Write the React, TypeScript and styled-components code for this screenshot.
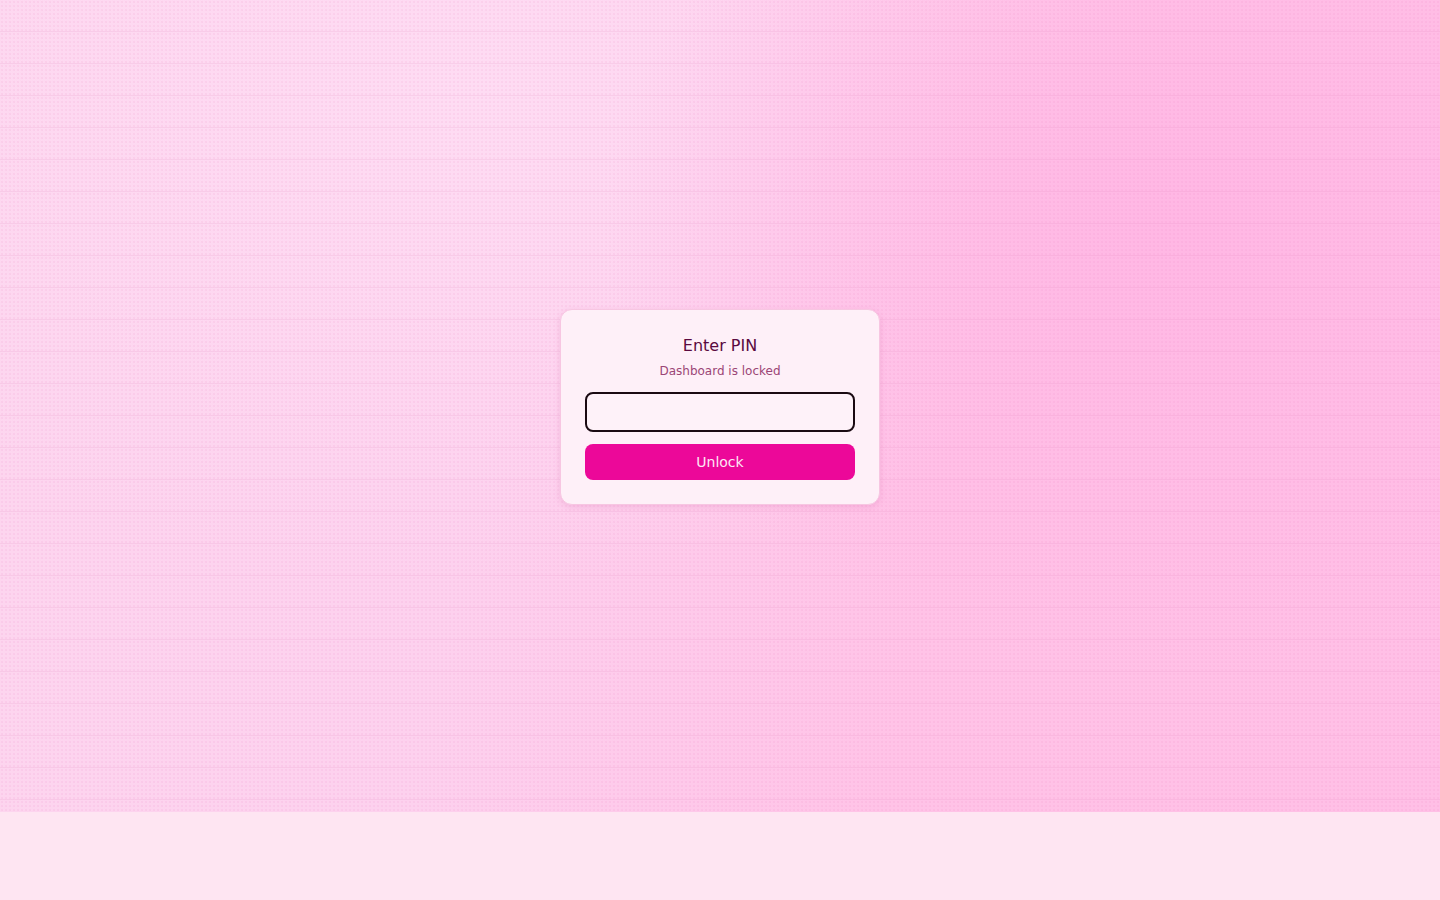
import React from "react";
import styled, { createGlobalStyle } from "styled-components";

const Global = createGlobalStyle`
  html, body { margin: 0; padding: 0; background: #fee5f2; }
  body { font-family: "DejaVu Sans", "Noto Sans", sans-serif; }
  * { box-sizing: border-box; }
`;

const Screen = styled.main`
  height: 812px;
  padding-top: 1px;
  display: flex;
  align-items: center;
  justify-content: center;
  background:
    repeating-linear-gradient(to bottom, transparent 0 31px, rgba(215, 110, 170, 0.12) 31px 32px),
    radial-gradient(circle, rgba(230, 110, 180, 0.1) 0.7px, transparent 1px) 0 0 / 4px 4px,
    radial-gradient(ellipse 40% 55% at 82% 28%, #ffb7e4 0%, rgba(255, 183, 228, 0) 100%),
    radial-gradient(ellipse 50% 60% at 32% 12%, #fedcf3 0%, rgba(254, 220, 243, 0) 100%),
    linear-gradient(100deg, #fdd6ef 0%, #fdd1ee 35%, #ffc3e7 65%, #ffbfe6 100%);
`;

const Card = styled.section`
  width: 320px;
  padding: 24px;
  display: flex;
  flex-direction: column;
  align-items: stretch;
  background: #fef0f8;
  border: 1px solid #f7c6e2;
  border-radius: 12px;
  box-shadow: 0 2px 6px rgba(200, 80, 150, 0.18);
`;

const Title = styled.h1`
  margin: 1px 0 0;
  font-size: 16px;
  font-weight: 400;
  line-height: 22px;
  text-align: center;
  color: #5a0a40;
`;

const Subtitle = styled.p`
  margin: 6px 0 13px;
  font-size: 12px;
  line-height: 16px;
  text-align: center;
  color: #9b4676;
`;

const PinInput = styled.input`
  height: 40px;
  width: 100%;
  border: 2px solid #1a0a12;
  border-radius: 8px;
  background: #fef2f9;
  text-align: center;
  font-family: inherit;
  font-size: 16px;
  color: #5a0a40;
  caret-color: #5a0a40;
  outline: none;
`;

const UnlockButton = styled.button`
  margin-top: 12px;
  height: 36px;
  width: 100%;
  border: none;
  border-radius: 8px;
  background: #ec0899;
  color: #fde7f4;
  font-family: inherit;
  font-size: 14px;
  cursor: pointer;
`;

export default function App() {
  return (
    <>
      <Global />
      <Screen>
        <Card>
          <Title>Enter PIN</Title>
          <Subtitle>Dashboard is locked</Subtitle>
          <PinInput type="password" autoFocus aria-label="PIN" />
          <UnlockButton>Unlock</UnlockButton>
        </Card>
      </Screen>
    </>
  );
}
